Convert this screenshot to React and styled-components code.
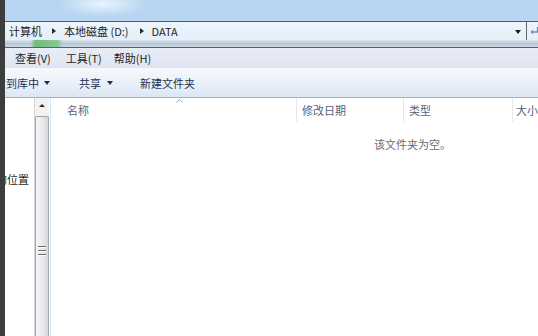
import React from "react";
import styled, { createGlobalStyle } from "styled-components";

const GlobalStyle = createGlobalStyle`
  html, body { margin: 0; padding: 0; background: #fff; }
  body {
    font-family: "Noto Sans CJK SC", "Noto Sans", sans-serif;
    font-size: 11px;
    color: #1f1f1f;
  }
`;

const Root = styled.div`
  width: 538px;
  height: 336px;
  display: flex;
  overflow: hidden;
`;

const DarkStrip = styled.div`
  width: 5px;
  flex-shrink: 0;
  background: #3d3d3d;
`;

const Win = styled.div`
  flex: 1;
  min-width: 0;
  display: flex;
  flex-direction: column;
  overflow: hidden;
`;

const TitleArea = styled.div`
  height: 21px;
  flex-shrink: 0;
  background:
    radial-gradient(ellipse 44px 12px at 98px 4px, rgba(236, 245, 253, 0.95), rgba(236, 245, 253, 0) 100%),
    #b8d6f2;
`;

const AddressRow = styled.div`
  height: 18px;
  flex-shrink: 0;
  display: flex;
  border-top: 1px solid #4d5964;
  background: linear-gradient(#eef5fc, #e5eff9);
`;

const AddressBox = styled.div`
  flex: 1;
  display: flex;
  align-items: center;
  padding-left: 4px;
  border-right: 1px solid #5c6773;
`;

const Crumb = styled.span`
  white-space: nowrap;
  line-height: 16px;
  color: #222;
`;

const CrumbSep = styled.span`
  width: 0;
  height: 0;
  border-left: 4px solid #2a2a2a;
  border-top: 3px solid transparent;
  border-bottom: 3px solid transparent;
  margin: 0 ${(p) => p.$after}px 0 ${(p) => p.$before}px;
`;

const Spacer = styled.div`
  flex: 1;
`;

const DropArrow = styled.span`
  width: 0;
  height: 0;
  border-top: 4px solid #1a1a1a;
  border-left: 3px solid transparent;
  border-right: 3px solid transparent;
  margin-right: 5px;
  margin-top: 2px;
`;

const RefreshCell = styled.div`
  width: 11px;
  display: flex;
  align-items: center;
  justify-content: flex-end;
`;

const Band = styled.div`
  height: 7px;
  flex-shrink: 0;
  background:
    linear-gradient(90deg, rgba(0,0,0,0) 0, rgba(0,0,0,0) 26px, rgba(98, 186, 110, 0.85) 30px, rgba(120, 196, 128, 0.8) 52px, rgba(0,0,0,0) 58px),
    linear-gradient(#dbe4ee, #b9c7d6 50%, #cad6e2);
  border-bottom: 1px solid #58626d;
`;

const MenuBar = styled.div`
  height: 20px;
  flex-shrink: 0;
  display: flex;
  align-items: center;
  padding-left: 10px;
  background: linear-gradient(#e8ecf6, #dfe5f1);
`;

const MenuItem = styled.span`
  line-height: 18px;
  margin-right: ${(p) => p.$gap || 0}px;
  white-space: nowrap;
  color: #1f1f1f;
`;

const Toolbar = styled.div`
  height: 29px;
  flex-shrink: 0;
  display: flex;
  align-items: center;
  overflow: hidden;
  background: linear-gradient(#f6f9fd, #ecf2fa 45%, #dce7f4);
  border-bottom: 1px solid #a2b2c6;
`;

const ToolButton = styled.div`
  display: flex;
  align-items: center;
  flex-shrink: 0;
  margin-left: ${(p) => p.$offset}px;
  color: #1e3250;
  white-space: nowrap;
  line-height: 16px;
`;

const ToolArrow = styled.span`
  width: 0;
  height: 0;
  border-top: 4px solid #1e3250;
  border-left: 3px solid transparent;
  border-right: 3px solid transparent;
  margin-left: ${(p) => p.$gap}px;
  margin-top: 1px;
`;

const Body = styled.div`
  flex: 1;
  display: flex;
  min-height: 0;
  background: #fff;
`;

const NavPane = styled.div`
  width: 29px;
  flex-shrink: 0;
  overflow: hidden;
  padding-top: 73px;
`;

const NavItem = styled.div`
  margin-left: -9px;
  white-space: nowrap;
  line-height: 16px;
  color: #1f1f1f;
`;

const Scrollbar = styled.div`
  width: 14px;
  flex-shrink: 0;
  display: flex;
  flex-direction: column;
  background: #f2f2f2;
  border-left: 1px solid #d4d4d4;
`;

const ScrollButton = styled.div`
  height: 18px;
  flex-shrink: 0;
  display: flex;
  justify-content: center;
  padding-top: 6px;
  box-sizing: border-box;
`;

const UpArrow = styled.span`
  width: 0;
  height: 0;
  border-bottom: 3px solid #2b2b2b;
  border-left: 3px solid transparent;
  border-right: 3px solid transparent;
`;

const Thumb = styled.div`
  flex: 1;
  display: flex;
  flex-direction: column;
  align-items: center;
  border: 1px solid #a6a6a6;
  border-bottom: none;
  border-radius: 2px 2px 0 0;
  background: linear-gradient(90deg, #f6f6f8, #e9e9ed 55%, #d4d4da);
`;

const Grip = styled.div`
  margin-top: 129px;
  display: flex;
  flex-direction: column;
  gap: 2px;
`;

const GripLine = styled.span`
  width: 8px;
  height: 1px;
  background: #6e6e6e;
  border-bottom: 1px solid #f8f8f8;
`;

const Splitter = styled.div`
  width: 2px;
  flex-shrink: 0;
  background: linear-gradient(90deg, #ffffff 50%, #d5e4f2 50%);
`;

const Content = styled.div`
  flex: 1;
  min-width: 0;
  display: flex;
  flex-direction: column;
  overflow: hidden;
`;

const HeaderRow = styled.div`
  height: 24px;
  flex-shrink: 0;
  display: flex;
`;

const HeaderCell = styled.div`
  position: relative;
  width: ${(p) => p.$w}px;
  flex-shrink: 0;
  box-sizing: border-box;
  padding-left: ${(p) => p.$pad}px;
  display: flex;
  align-items: center;
  border-right: 1px solid #e4e8ee;
  color: #56637a;
  white-space: nowrap;
  &:last-child { border-right: none; }
`;

const SortMark = styled.svg`
  position: absolute;
  left: 125px;
  top: 1px;
`;

const EmptyMsg = styled.div`
  margin-top: 14px;
  padding-left: 323px;
  line-height: 16px;
  color: #6b6b6b;
  white-space: nowrap;
`;

export default function App() {
  return (
    <>
      <GlobalStyle />
      <Root>
        <DarkStrip />
        <Win>
          <TitleArea />
          <AddressRow>
            <AddressBox>
              <Crumb>计算机</Crumb>
              <CrumbSep $before={10} $after={8} />
              <Crumb>本地磁盘 (D:)</Crumb>
              <CrumbSep $before={11} $after={8} />
              <Crumb>DATA</Crumb>
              <Spacer />
              <DropArrow />
            </AddressBox>
            <RefreshCell>
              <svg width="8" height="10" viewBox="0 0 8 10">
                <path d="M7.5 1 V6 H2" fill="none" stroke="#6f8db0" strokeWidth="1.3" />
                <path d="M0.5 6 L3.2 3.4 V8.6 Z" fill="#6f8db0" />
              </svg>
            </RefreshCell>
          </AddressRow>
          <Band />
          <MenuBar>
            <MenuItem $gap={15}>查看(V)</MenuItem>
            <MenuItem $gap={12}>工具(T)</MenuItem>
            <MenuItem>帮助(H)</MenuItem>
          </MenuBar>
          <Toolbar>
            <ToolButton $offset={-21}>
              包含到库中
              <ToolArrow $gap={5} />
            </ToolButton>
            <ToolButton $offset={29}>
              共享
              <ToolArrow $gap={6} />
            </ToolButton>
            <ToolButton $offset={27}>新建文件夹</ToolButton>
          </Toolbar>
          <Body>
            <NavPane>
              <NavItem>的位置</NavItem>
            </NavPane>
            <Scrollbar>
              <ScrollButton>
                <UpArrow />
              </ScrollButton>
              <Thumb>
                <Grip>
                  <GripLine />
                  <GripLine />
                  <GripLine />
                </Grip>
              </Thumb>
            </Scrollbar>
            <Splitter />
            <Content>
              <HeaderRow>
                <HeaderCell $w={246} $pad={16}>
                  <SortMark width="7" height="4" viewBox="0 0 7 4">
                    <path d="M0.5 3.5 L3.5 0.5 L6.5 3.5" fill="none" stroke="#9aa3ad" strokeWidth="1" />
                  </SortMark>
                  名称
                </HeaderCell>
                <HeaderCell $w={107} $pad={5}>修改日期</HeaderCell>
                <HeaderCell $w={109} $pad={5}>类型</HeaderCell>
                <HeaderCell $w={60} $pad={3}>大小</HeaderCell>
              </HeaderRow>
              <EmptyMsg>该文件夹为空。</EmptyMsg>
            </Content>
          </Body>
        </Win>
      </Root>
    </>
  );
}
